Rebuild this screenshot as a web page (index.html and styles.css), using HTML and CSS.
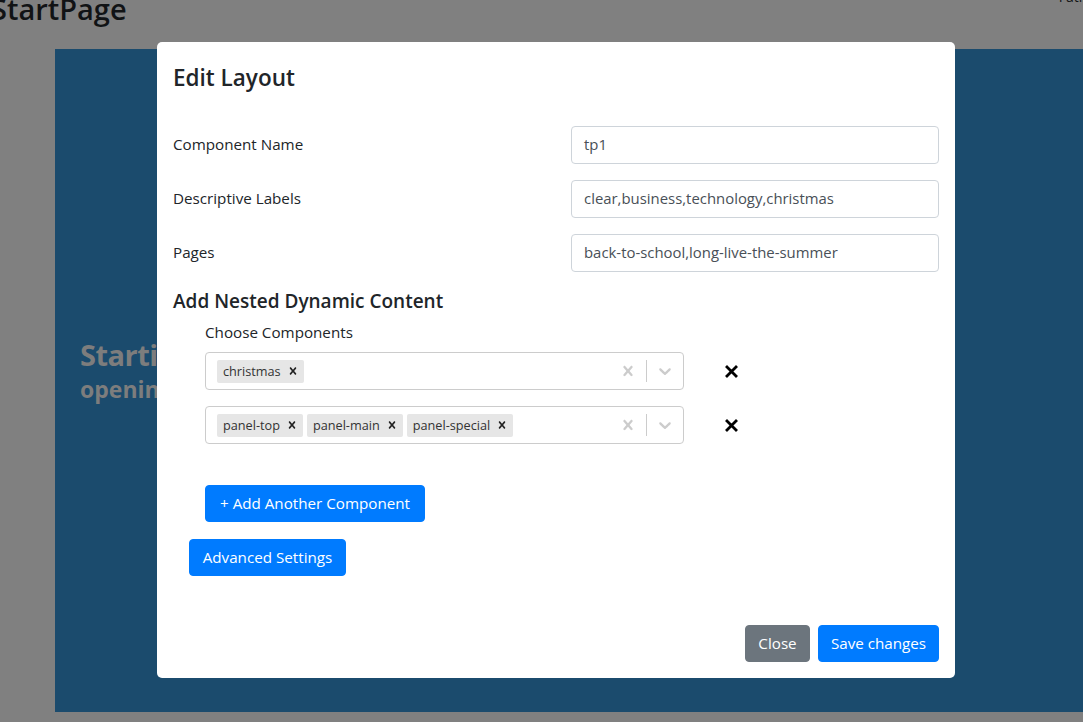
FILE: index.html
```html
<!DOCTYPE html>
<html>
<head>
<meta charset="utf-8">
<link rel="stylesheet" href="styles.css">
</head>
<body>
<div class="topbar">
  <div class="brand">StartPage</div>
  <div class="user">Fatima</div>
</div>
<div class="hero">
  <div class="hero-title">Starting page</div>
  <div class="hero-sub">opening hours</div>
</div>

<div class="modal">
  <div class="modal-header">
    <h5 class="modal-title">Edit Layout</h5>
  </div>
  <div class="modal-body">
    <div class="form-row">
      <label class="form-label">Component Name</label>
      <div class="form-control">tp1</div>
    </div>
    <div class="form-row">
      <label class="form-label">Descriptive Labels</label>
      <div class="form-control">clear,business,technology,christmas</div>
    </div>
    <div class="form-row">
      <label class="form-label">Pages</label>
      <div class="form-control">back-to-school,long-live-the-summer</div>
    </div>

    <h5 class="section-title">Add Nested Dynamic Content</h5>
    <div class="nested">
      <div class="nested-label">Choose Components</div>
      <div class="select-row">
        <div class="select">
          <div class="values">
            <span class="chip"><span class="chip-label">christmas</span><span class="chip-remove"><svg viewBox="0 0 20 20" width="14" height="14"><path d="M14.348 14.849c-0.469 0.469-1.229 0.469-1.697 0l-2.651-3.030-2.651 3.029c-0.469 0.469-1.229 0.469-1.697 0-0.469-0.469-0.469-1.229 0-1.697l2.758-3.15-2.759-3.152c-0.469-0.469-0.469-1.228 0-1.697s1.228-0.469 1.697 0l2.652 3.031 2.651-3.031c0.469-0.469 1.228-0.469 1.697 0s0.469 1.229 0 1.697l-2.758 3.152 2.758 3.15c0.469 0.469 0.469 1.229 0 1.698z"/></svg></span></span>
          </div>
          <div class="indicators">
            <span class="ind"><svg viewBox="0 0 20 20" width="20" height="20"><path d="M14.348 14.849c-0.469 0.469-1.229 0.469-1.697 0l-2.651-3.030-2.651 3.029c-0.469 0.469-1.229 0.469-1.697 0-0.469-0.469-0.469-1.229 0-1.697l2.758-3.15-2.759-3.152c-0.469-0.469-0.469-1.228 0-1.697s1.228-0.469 1.697 0l2.652 3.031 2.651-3.031c0.469-0.469 1.228-0.469 1.697 0s0.469 1.229 0 1.697l-2.758 3.152 2.758 3.15c0.469 0.469 0.469 1.229 0 1.698z"/></svg></span>
            <span class="sep"></span>
            <span class="ind"><svg viewBox="0 0 20 20" width="20" height="20"><path d="M4.516 7.548c0.436-0.446 1.043-0.481 1.576 0l3.908 3.747 3.908-3.747c0.533-0.481 1.141-0.446 1.574 0 0.436 0.445 0.408 1.197 0 1.615-0.406 0.418-4.695 4.502-4.695 4.502-0.217 0.223-0.502 0.335-0.787 0.335s-0.57-0.112-0.789-0.335c0 0-4.287-4.084-4.695-4.502s-0.436-1.17 0-1.615z"/></svg></span>
          </div>
        </div>
        <span class="remove-row"><svg viewBox="0 0 13 13" width="13" height="13"><path d="M2 2 L11 11 M11 2 L2 11" stroke="#000" stroke-width="2.8" stroke-linecap="square"/></svg></span>
      </div>
      <div class="select-row">
        <div class="select">
          <div class="values">
            <span class="chip"><span class="chip-label">panel-top</span><span class="chip-remove"><svg viewBox="0 0 20 20" width="14" height="14"><path d="M14.348 14.849c-0.469 0.469-1.229 0.469-1.697 0l-2.651-3.030-2.651 3.029c-0.469 0.469-1.229 0.469-1.697 0-0.469-0.469-0.469-1.229 0-1.697l2.758-3.15-2.759-3.152c-0.469-0.469-0.469-1.228 0-1.697s1.228-0.469 1.697 0l2.652 3.031 2.651-3.031c0.469-0.469 1.228-0.469 1.697 0s0.469 1.229 0 1.697l-2.758 3.152 2.758 3.15c0.469 0.469 0.469 1.229 0 1.698z"/></svg></span></span>
            <span class="chip"><span class="chip-label">panel-main</span><span class="chip-remove"><svg viewBox="0 0 20 20" width="14" height="14"><path d="M14.348 14.849c-0.469 0.469-1.229 0.469-1.697 0l-2.651-3.030-2.651 3.029c-0.469 0.469-1.229 0.469-1.697 0-0.469-0.469-0.469-1.229 0-1.697l2.758-3.15-2.759-3.152c-0.469-0.469-0.469-1.228 0-1.697s1.228-0.469 1.697 0l2.652 3.031 2.651-3.031c0.469-0.469 1.228-0.469 1.697 0s0.469 1.229 0 1.697l-2.758 3.152 2.758 3.15c0.469 0.469 0.469 1.229 0 1.698z"/></svg></span></span>
            <span class="chip"><span class="chip-label">panel-special</span><span class="chip-remove"><svg viewBox="0 0 20 20" width="14" height="14"><path d="M14.348 14.849c-0.469 0.469-1.229 0.469-1.697 0l-2.651-3.030-2.651 3.029c-0.469 0.469-1.229 0.469-1.697 0-0.469-0.469-0.469-1.229 0-1.697l2.758-3.15-2.759-3.152c-0.469-0.469-0.469-1.228 0-1.697s1.228-0.469 1.697 0l2.652 3.031 2.651-3.031c0.469-0.469 1.228-0.469 1.697 0s0.469 1.229 0 1.697l-2.758 3.152 2.758 3.15c0.469 0.469 0.469 1.229 0 1.698z"/></svg></span></span>
          </div>
          <div class="indicators">
            <span class="ind"><svg viewBox="0 0 20 20" width="20" height="20"><path d="M14.348 14.849c-0.469 0.469-1.229 0.469-1.697 0l-2.651-3.030-2.651 3.029c-0.469 0.469-1.229 0.469-1.697 0-0.469-0.469-0.469-1.229 0-1.697l2.758-3.15-2.759-3.152c-0.469-0.469-0.469-1.228 0-1.697s1.228-0.469 1.697 0l2.652 3.031 2.651-3.031c0.469-0.469 1.228-0.469 1.697 0s0.469 1.229 0 1.697l-2.758 3.152 2.758 3.15c0.469 0.469 0.469 1.229 0 1.698z"/></svg></span>
            <span class="sep"></span>
            <span class="ind"><svg viewBox="0 0 20 20" width="20" height="20"><path d="M4.516 7.548c0.436-0.446 1.043-0.481 1.576 0l3.908 3.747 3.908-3.747c0.533-0.481 1.141-0.446 1.574 0 0.436 0.445 0.408 1.197 0 1.615-0.406 0.418-4.695 4.502-4.695 4.502-0.217 0.223-0.502 0.335-0.787 0.335s-0.57-0.112-0.789-0.335c0 0-4.287-4.084-4.695-4.502s-0.436-1.17 0-1.615z"/></svg></span>
          </div>
        </div>
        <span class="remove-row"><svg viewBox="0 0 13 13" width="13" height="13"><path d="M2 2 L11 11 M11 2 L2 11" stroke="#000" stroke-width="2.8" stroke-linecap="square"/></svg></span>
      </div>
      <button class="btn btn-primary add-btn">+ Add Another Component</button>
    </div>
    <button class="btn btn-primary adv-btn">Advanced Settings</button>
  </div>
  <div class="modal-footer">
    <button class="btn btn-secondary">Close</button>
    <button class="btn btn-primary">Save changes</button>
  </div>
</div>
</body>
</html>
```

FILE: styles.css
```css
* { box-sizing: border-box; }
html, body { margin: 0; padding: 0; }
body {
  width: 1083px;
  height: 722px;
  overflow: hidden;
  background: #808080;
  font-family: "Open Sans", "Noto Sans", sans-serif;
  position: relative;
}
.topbar {
  height: 49px;
  display: flex;
  justify-content: space-between;
  align-items: flex-start;
}
.brand {
  font-size: 29px;
  font-weight: 600;
  color: #111315;
  margin-left: -9px;
  margin-top: -11px;
  line-height: 40px;
}
.user {
  font-size: 14px;
  color: #111315;
  margin-top: -13px;
  margin-right: -20px;
  line-height: 20px;
}
.hero {
  margin-left: 55px;
  height: 663px;
  background: #1b4b6d;
  padding: 287px 0 0 25px;
  color: #7d7d7d;
  font-weight: 700;
}
.hero-title { font-size: 29px; line-height: 38px; letter-spacing: -0.5px; }
.hero-sub { font-size: 23px; line-height: 30px; }

.modal {
  position: absolute;
  left: 157px;
  top: 42px;
  width: 798px;
  background: #fff;
  border-radius: 5px;
  color: #212529;
}
.modal-header {
  padding: 20px 16px 16px;
}
.modal-title {
  margin: 0;
  font-size: 22.5px;
  font-weight: 600;
  line-height: 31px;
}
.modal-body {
  padding: 17px 16px 0;
}
.form-row {
  display: grid;
  grid-template-columns: 1fr 368px;
  align-items: center;
  margin-bottom: 16px;
}
.form-label {
  font-size: 15.2px;
  line-height: 24px;
  padding-bottom: 2px;
}
.form-control {
  height: 38px;
  border: 1px solid #ced4da;
  border-radius: 4px;
  padding: 0 12px 2px;
  font-size: 14.9px;
  line-height: 34px;
  color: #495057;
}
.section-title {
  margin: 17px 0 0;
  font-size: 19px;
  font-weight: 600;
  line-height: 24px;
}
.nested {
  padding-left: 32px;
}
.nested-label {
  margin-top: 7px;
  font-size: 15.2px;
  line-height: 24px;
  margin-bottom: 8px;
}
.select-row {
  display: flex;
  align-items: center;
  margin-bottom: 16px;
}
.select {
  width: 479px;
  height: 38px;
  border: 1px solid #ccc;
  border-radius: 4px;
  display: flex;
  align-items: center;
}
.values {
  flex: 1;
  display: flex;
  padding: 2px 8px 2px 9px;
}
.chip {
  display: flex;
  align-items: center;
  background: #e6e6e6;
  border-radius: 2px;
  margin: 2px;
  height: 23px;
}
.chip-label {
  font-size: 12.7px;
  color: #333;
  padding: 0 3px 1px 6px;
}
.chip-remove {
  display: flex;
  align-items: center;
  padding: 0 4px 0 2px;
  fill: #222;
}
.indicators {
  display: flex;
  align-items: center;
  height: 100%;
}
.ind {
  padding: 8px;
  display: flex;
  fill: #ccc;
}
.sep {
  width: 1px;
  height: 22px;
  background: #ccc;
}
.remove-row {
  margin-left: 41px;
  display: flex;
}
.btn {
  font-family: inherit;
  font-size: 15.2px;
  line-height: 24px;
  height: 37px;
  padding: 0 0 2px;
  border: 1px solid transparent;
  border-radius: 4px;
  color: #fff;
  cursor: pointer;
}
.btn-primary { background: #007bff; border-color: #007bff; }
.btn-secondary { background: #6c757d; border-color: #6c757d; }
.add-btn {
  margin-top: 25px;
  width: 220px;
}
.adv-btn {
  margin-top: 17px;
  margin-left: 16px;
  width: 157px;
}
.modal-footer {
  display: flex;
  justify-content: flex-end;
  gap: 8px;
  padding: 49px 16px 16px;
}
.modal-footer .btn-secondary { width: 65px; }
.modal-footer .btn-primary { width: 121px; }
```
